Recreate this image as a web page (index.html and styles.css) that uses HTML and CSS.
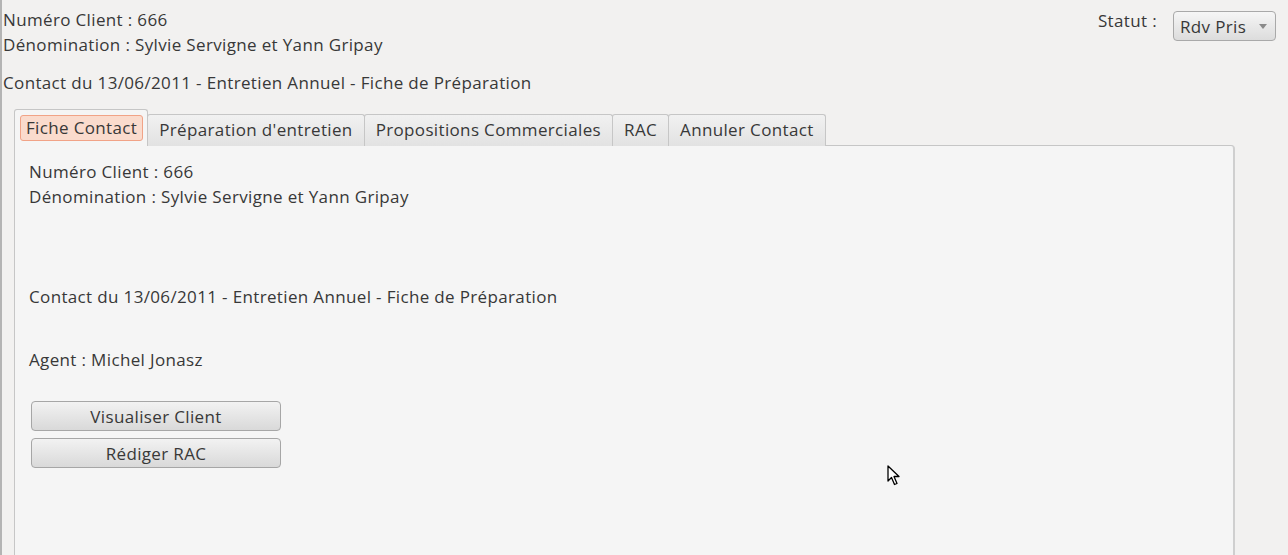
FILE: index.html
```html
<!DOCTYPE html>
<html lang="fr">
<head>
<meta charset="utf-8">
<title>Fiche Contact</title>
<link rel="stylesheet" href="styles.css">
</head>
<body>
<div class="window">
  <header class="top">
    <div class="info">
      <div class="line">Numéro Client : 666</div>
      <div class="line">Dénomination : Sylvie Servigne et Yann Gripay</div>
      <div class="line contact">Contact du 13/06/2011 - Entretien Annuel - Fiche de Préparation</div>
    </div>
    <div class="status">
      <span class="status-label">Statut :</span>
      <div class="combo"><span>Rdv Pris</span><span class="arrow"></span></div>
    </div>
  </header>
  <div class="notebook">
    <div class="tabs">
      <div class="tab active"><span class="focus">Fiche Contact</span></div>
      <div class="tab">Préparation d'entretien</div>
      <div class="tab">Propositions Commerciales</div>
      <div class="tab">RAC</div>
      <div class="tab">Annuler Contact</div>
    </div>
    <div class="page">
      <div class="line">Numéro Client : 666</div>
      <div class="line">Dénomination : Sylvie Servigne et Yann Gripay</div>
      <div class="line gap-contact">Contact du 13/06/2011 - Entretien Annuel - Fiche de Préparation</div>
      <div class="line gap-agent">Agent : Michel Jonasz</div>
      <div class="buttons">
        <button class="btn">Visualiser Client</button>
        <button class="btn">Rédiger RAC</button>
      </div>
    </div>
  </div>
  <svg class="cursor" width="14" height="22" viewBox="0 0 14 22"><path d="M1 1 L1 16 L4.5 12.5 L7.5 19.5 L10 18.5 L7 11.5 L12 11.5 Z" fill="#fff" stroke="#000" stroke-width="1.3" stroke-linejoin="round"/></svg>
</div>
</body>
</html>
```
FILE: styles.css
```css
html, body {
  margin: 0;
  padding: 0;
  height: 100%;
  overflow: hidden;
}
body {
  background: #f2f1f0;
  font-family: "Open Sans", "DejaVu Sans", sans-serif;
  font-size: 17px;
  letter-spacing: 0.35px;
  color: #383838;
}
.window {
  position: relative;
  height: 100%;
  border-left: 2px solid #b4b4b4;
  box-sizing: border-box;
}
.top {
  display: flex;
  justify-content: space-between;
  align-items: flex-start;
  padding: 7px 12px 0 1px;
}
.line {
  height: 25px;
  line-height: 25px;
  white-space: nowrap;
}
.contact {
  margin-top: 13px;
}
.status {
  display: flex;
  align-items: center;
  gap: 16px;
  margin-top: 4px;
}
.status-label {
  margin-top: -11px;
}
.combo {
  display: flex;
  align-items: center;
  justify-content: space-between;
  width: 103px;
  height: 30px;
  box-sizing: border-box;
  padding: 0 8px 0 6px;
  border: 1px solid #a9a9a9;
  border-radius: 4px;
  background: linear-gradient(#f6f6f6, #dcdcdc);
}
.arrow {
  width: 0;
  height: 0;
  border-left: 4px solid transparent;
  border-right: 4px solid transparent;
  border-top: 5px solid #8a8a8a;
}
.notebook {
  margin: 15px 0 0 12px;
  width: 1221px;
}
.tabs {
  display: flex;
  align-items: flex-end;
  height: 36px;
  margin-bottom: -1px;
  position: relative;
  z-index: 1;
}
.tab {
  height: 32px;
  box-sizing: border-box;
  line-height: 29px;
  padding: 0 11px;
  border: 1px solid #c6c6c6;
  border-bottom: none;
  border-radius: 3px 3px 0 0;
  background: linear-gradient(#f1f1f1, #e2e2e2);
  margin-right: -1px;
  white-space: nowrap;
}
.tab.active {
  height: 37px;
  background: #f5f5f5;
  padding: 5px 4px 0 5px;
  line-height: normal;
}
.focus {
  display: block;
  height: 26px;
  line-height: 24px;
  box-sizing: border-box;
  padding: 0 5px;
  border: 1px solid #f1a387;
  border-radius: 3px;
  background: #fadbcd;
}
.page {
  background: #f5f5f5;
  border: 1px solid #c6c6c6;
  border-right: 2px solid #cfcfcf;
  border-radius: 0 4px 0 0;
  padding: 13px 14px 0;
  height: 420px;
}
.gap-contact {
  margin-top: 75px;
}
.gap-agent {
  margin-top: 38px;
}
.buttons {
  display: flex;
  flex-direction: column;
  gap: 7px;
  margin-top: 29px;
  width: 250px;
  margin-left: 2px;
}
.btn {
  height: 30px;
  border: 1px solid #a6a6a6;
  border-radius: 4px;
  background: linear-gradient(#f2f2f2, #d9d9d9);
  font-family: inherit;
  font-size: inherit;
  letter-spacing: inherit;
  color: #383838;
  padding: 0;
}
.cursor {
  position: absolute;
  left: 885px;
  top: 465px;
}
```
